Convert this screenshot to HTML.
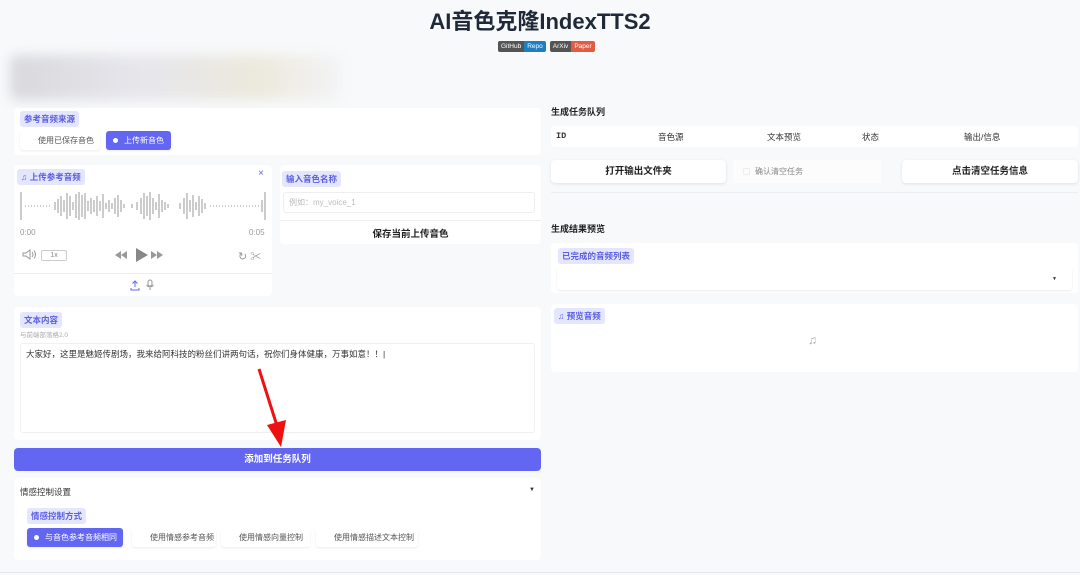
<!DOCTYPE html>
<html><head><meta charset="utf-8"><style>
*{box-sizing:border-box;margin:0;padding:0}
body{width:1080px;height:575px;background:#f8f9fb;font-family:"Liberation Sans","Noto Sans CJK SC",sans-serif;position:relative;overflow:hidden;color:#333;font-size:9px}
.a{position:absolute;white-space:nowrap}
.panel{position:absolute;background:#fff;border-radius:4px}
.lbl{position:absolute;background:#e3e6fd;color:#5b5fe0;font-weight:bold;font-size:8.5px;padding:2px 4px;border-radius:3px;white-space:nowrap}
.rad{position:absolute;height:19px;border-radius:3px;background:#fff;box-shadow:0 1px 2px rgba(0,0,0,.08);font-size:8px;color:#555;line-height:19px;padding-left:18px;white-space:nowrap;overflow:hidden}
.rad.on{background:#6366f1;color:#fff}
.rad.on:before{content:"";position:absolute;left:7px;top:7px;width:5px;height:5px;border-radius:50%;background:#fff}
.btn{position:absolute;background:#fff;border-radius:4px;box-shadow:0 1px 3px rgba(0,0,0,.1);text-align:center;font-weight:bold;font-size:9.5px;color:#222}
</style></head><body>
<div class="a" style="left:0;width:1080px;top:8px;text-align:center;font-size:22px;line-height:28px;font-weight:bold;color:#1f2937">AI音色克隆IndexTTS2</div>
<div class="a" style="left:498px;top:41px;height:11px;font-size:6.5px;line-height:11px;display:flex">
<span style="background:#555;color:#fff;padding:0 3px;border-radius:2px 0 0 2px">GitHub</span><span style="background:#1e7ec2;color:#fff;padding:0 3px;border-radius:0 2px 2px 0">Repo</span>
<span style="width:4px"></span>
<span style="background:#555;color:#fff;padding:0 3px;border-radius:2px 0 0 2px">ArXiv</span><span style="background:#e05d44;color:#fff;padding:0 3px;border-radius:0 2px 2px 0">Paper</span></div>
<div class="a" style="left:10px;top:55px;width:330px;height:45px;background:linear-gradient(90deg,#d8d8dd,#e6e6ec 40%,#ece9dc 75%,#f3f3f5);filter:blur(6px);border-radius:8px"></div>

<div class="panel" style="left:14px;top:108px;width:527px;height:47px"></div>
<div class="lbl" style="left:20px;top:111px">参考音频来源</div>
<div class="rad" style="left:20px;top:131px;width:80px">使用已保存音色</div>
<div class="rad on" style="left:106px;top:131px;width:65px">上传新音色</div>

<div class="panel" style="left:14px;top:165px;width:258px;height:131px"></div>
<div class="lbl" style="left:17px;top:169px">♫ 上传参考音频</div>
<div class="a" style="left:258px;top:168px;font-size:10px;color:#6366f1">×</div>
<svg class="a" style="left:20px;top:190px" width="246" height="32"><g stroke="#999" stroke-width="1">
<line x1="1" y1="2" x2="1" y2="30"/><line x1="245" y1="2" x2="245" y2="30"/>
<line x1="5" y1="16" x2="30" y2="16" stroke-dasharray="1 2"/>
<path d="M35 12v8M38 9v14M41 6v20M44 10v12M47 3v26M50 6v20M53 12v8M56 4v24M59 2v28M62 5v22M65 3v26M68 11v10M71 8v16M74 10v12M77 6v20M80 11v10M83 4v24M86 13v6M89 10v12M92 13v6M95 8v16M98 5v22M101 10v12M104 14v4M112 14v4M117 12v8M121 8v16M124 3v26M127 6v20M130 2v28M133 8v16M136 12v8M139 4v24M142 10v12M145 12v8M148 14v4M160 13v6M164 8v16M167 3v26M170 10v12M173 5v22M176 12v8M179 6v20M182 9v14M185 13v6"/>
<line x1="190" y1="16" x2="240" y2="16" stroke-dasharray="1 2"/><path d="M242 10v12"/></g></svg>
<div class="a" style="left:20px;top:228px;color:#999;font-size:8px">0:00</div>
<div class="a" style="left:249px;top:228px;color:#999;font-size:8px">0:05</div>
<svg class="a" style="left:22px;top:249px" width="14" height="11"><path d="M1 4h3l4-3v9l-4-3H1z" fill="none" stroke="#999"/><path d="M10 3q2 2.5 0 5M12 1.5q3 4 0 8" fill="none" stroke="#999"/></svg>
<div class="a" style="left:41px;top:250px;width:26px;height:11px;border:1px solid #ccc;border-radius:2px;font-size:7px;color:#888;text-align:center;line-height:9px">1x</div>
<svg class="a" style="left:114px;top:247px" width="50" height="16"><g fill="#999"><path d="M1 8l6-4v8zM7 8l6-4v8z"/><path d="M22 1l12 7-12 7z" fill="#888"/><path d="M37 4l6 4-6 4zM43 4l6 4-6 4z"/></g></svg>
<div class="a" style="left:238px;top:248px;color:#999;font-size:11px">↻ ✂</div>
<div class="a" style="left:14px;top:273px;width:258px;border-top:1px solid #eee"></div>
<svg class="a" style="left:130px;top:279px" width="26" height="12"><path d="M5 8V2M2.5 4.5L5 2l2.5 2.5M1 9v2h8V9" fill="none" stroke="#6366f1"/><rect x="18" y="1" width="4" height="6" rx="2" fill="none" stroke="#999"/><path d="M16.5 6q3.5 4 7 0M20 9v2" fill="none" stroke="#999"/></svg>

<div class="panel" style="left:280px;top:165px;width:261px;height:79px"></div>
<div class="lbl" style="left:282px;top:171px">输入音色名称</div>
<div class="a" style="left:283px;top:192px;width:252px;height:21px;border:1px solid #eee;border-radius:3px;color:#bbb;font-size:8px;line-height:20px;padding-left:5px">例如：my_voice_1</div>
<div class="a" style="left:280px;top:220px;width:261px;border-top:1px solid #eee"></div>
<div class="a" style="left:280px;top:226px;width:261px;text-align:center;font-weight:bold;font-size:9.5px;color:#222">保存当前上传音色</div>

<div class="panel" style="left:14px;top:307px;width:527px;height:133px"></div>
<div class="lbl" style="left:20px;top:312px">文本内容</div>
<div class="a" style="left:20px;top:329px;color:#aaa;font-size:6.5px">与前端部落格2.0</div>
<div class="a" style="left:20px;top:343px;width:515px;height:90px;border:1px solid #f0f0f0;border-radius:3px"></div>
<div class="a" style="left:26px;top:348px;font-size:8.5px;color:#333">大家好，这里是魅姬传剧场，我来给阿科技的粉丝们讲两句话，祝你们身体健康，万事如意！！|</div>
<div class="a" style="left:14px;top:448px;width:527px;height:23px;background:#6366f1;border-radius:4px;color:#fff;font-weight:bold;font-size:9.5px;text-align:center;line-height:23px">添加到任务队列</div>
<svg class="a" style="left:250px;top:365px" width="40" height="85"><line x1="9" y1="4" x2="28" y2="64" stroke="#ee1111" stroke-width="3"/><polygon points="17,60 36,55 31,82" fill="#ee1111"/></svg>

<div class="panel" style="left:14px;top:478px;width:527px;height:82px"></div>
<div class="a" style="left:20px;top:486px;font-size:8.5px;color:#333">情感控制设置</div>
<div class="a" style="left:529px;top:487px;font-size:6px">▼</div>
<div class="lbl" style="left:27px;top:508px">情感控制方式</div>
<div class="rad on" style="left:27px;top:528px;width:96px">与音色参考音频相同</div>
<div class="rad" style="left:132px;top:528px;width:84px">使用情感参考音频</div>
<div class="rad" style="left:221px;top:528px;width:89px">使用情感向量控制</div>
<div class="rad" style="left:316px;top:528px;width:102px">使用情感描述文本控制</div>

<div class="a" style="left:551px;top:105px;font-weight:bold;font-size:9px;color:#222">生成任务队列</div>
<div class="panel" style="left:551px;top:126px;width:527px;height:21px"></div>
<div class="a" style="left:556px;top:131px;font-size:8.5px;font-weight:bold;color:#333;font-family:'Liberation Mono','Noto Sans CJK SC',monospace">ID</div>
<div class="a" style="left:658px;top:131px;font-size:8.5px;color:#333">音色源</div>
<div class="a" style="left:767px;top:131px;font-size:8.5px;color:#333">文本预览</div>
<div class="a" style="left:862px;top:131px;font-size:8.5px;color:#333">状态</div>
<div class="a" style="left:964px;top:131px;font-size:8.5px;color:#333">输出/信息</div>
<div class="btn" style="left:551px;top:160px;width:175px;height:23px;line-height:23px">打开输出文件夹</div>
<div class="a" style="left:733px;top:160px;width:148px;height:23px;background:#fcfcfd"></div>
<div class="a" style="left:743px;top:168px;width:7px;height:7px;border:1px solid #eee"></div>
<div class="a" style="left:755px;top:166px;font-size:8px;color:#888">确认清空任务</div>
<div class="btn" style="left:902px;top:160px;width:176px;height:23px;line-height:23px">点击清空任务信息</div>
<div class="a" style="left:551px;top:192px;width:527px;border-top:1px solid #eceef2"></div>
<div class="a" style="left:551px;top:222px;font-weight:bold;font-size:9px;color:#222">生成结果预览</div>
<div class="panel" style="left:551px;top:243px;width:527px;height:50px"></div>
<div class="lbl" style="left:558px;top:248px">已完成的音频列表</div>
<div class="a" style="left:557px;top:267px;width:515px;height:23px;border-radius:3px;box-shadow:0 1px 2px rgba(0,0,0,.08)"></div>
<div class="a" style="left:1052px;top:276px;font-size:5px;color:#333">▼</div>
<div class="panel" style="left:551px;top:304px;width:527px;height:68px"></div>
<div class="lbl" style="left:554px;top:308px">♫ 预览音频</div>
<div class="a" style="left:808px;top:333px;font-size:12px;color:#aaa">♫</div>
<div class="a" style="left:0;top:572px;width:1080px;border-top:1px solid #e5e7eb"></div>
</body></html>
